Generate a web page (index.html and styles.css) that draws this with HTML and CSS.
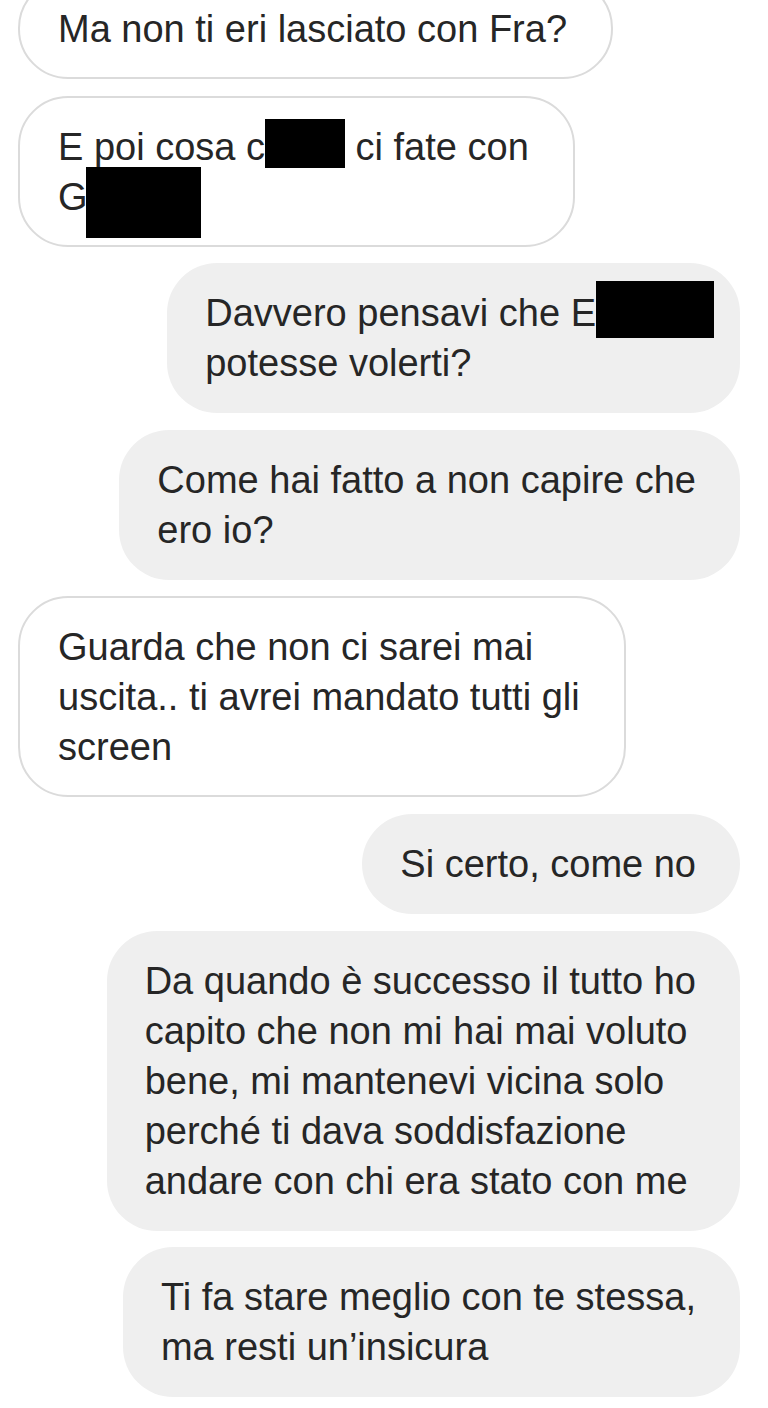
FILE: index.html
```html
<!DOCTYPE html>
<html lang="it">
<head>
<meta charset="utf-8">
<title>Chat</title>
<link rel="stylesheet" href="styles.css">
</head>
<body>
<main class="thread">
  <div class="msg in b1">Ma non ti eri lasciato con Fra?</div>
  <div class="msg in b2">E poi cosa c<span class="redact r1"></span> ci fate con<br>G<span class="redact r2"></span></div>
  <div class="msg out b3">Davvero pensavi che E<span class="redact r3"></span><br>potesse volerti?</div>
  <div class="msg out b4">Come hai fatto a non capire che<br>ero io?</div>
  <div class="msg in b5">Guarda che non ci sarei mai<br>uscita.. ti avrei mandato tutti gli<br>screen</div>
  <div class="msg out b6">Si certo, come no</div>
  <div class="msg out b7">Da quando è successo il tutto ho<br>capito che non mi hai mai voluto<br>bene, mi mantenevi vicina solo<br>perché ti dava soddisfazione<br>andare con chi era stato con me</div>
  <div class="msg out b8">Ti fa stare meglio con te stessa,<br>ma resti un’insicura</div>
</main>
</body>
</html>
```
FILE: styles.css
```css
html, body {
  margin: 0;
  padding: 0;
  background: #ffffff;
}
body {
  font-family: "Liberation Sans", Arial, sans-serif;
  color: #262626;
  width: 768px;
  height: 1408px;
  overflow: hidden;
}
.thread {
  display: flex;
  flex-direction: column;
  gap: 16.6px;
  padding: 0 28px 0 18px;
  margin-top: -22px;
}
.msg {
  font-size: 38px;
  line-height: 50px;
  padding: 25px 44px 25px 38px;
  border-radius: 50px;
  white-space: nowrap;
  box-sizing: border-box;
}
.in {
  align-self: flex-start;
  background: #ffffff;
  border: 2px solid #dbdbdb;
  padding-top: 24px;
  padding-bottom: 23px;
}
.out {
  align-self: flex-end;
  background: #efefef;
}
.redact {
  display: inline-block;
  background: #000000;
  vertical-align: top;
}
.r1 {
  width: 80px;
  height: 49px;
  margin: -3px 0 4px 0;
}
.r2 {
  width: 115px;
  height: 71px;
  margin: -5px 0 -16px -2px;
}
.r3 {
  width: 118px;
  height: 57px;
  margin: -7px -18px 0 0;
}
```
